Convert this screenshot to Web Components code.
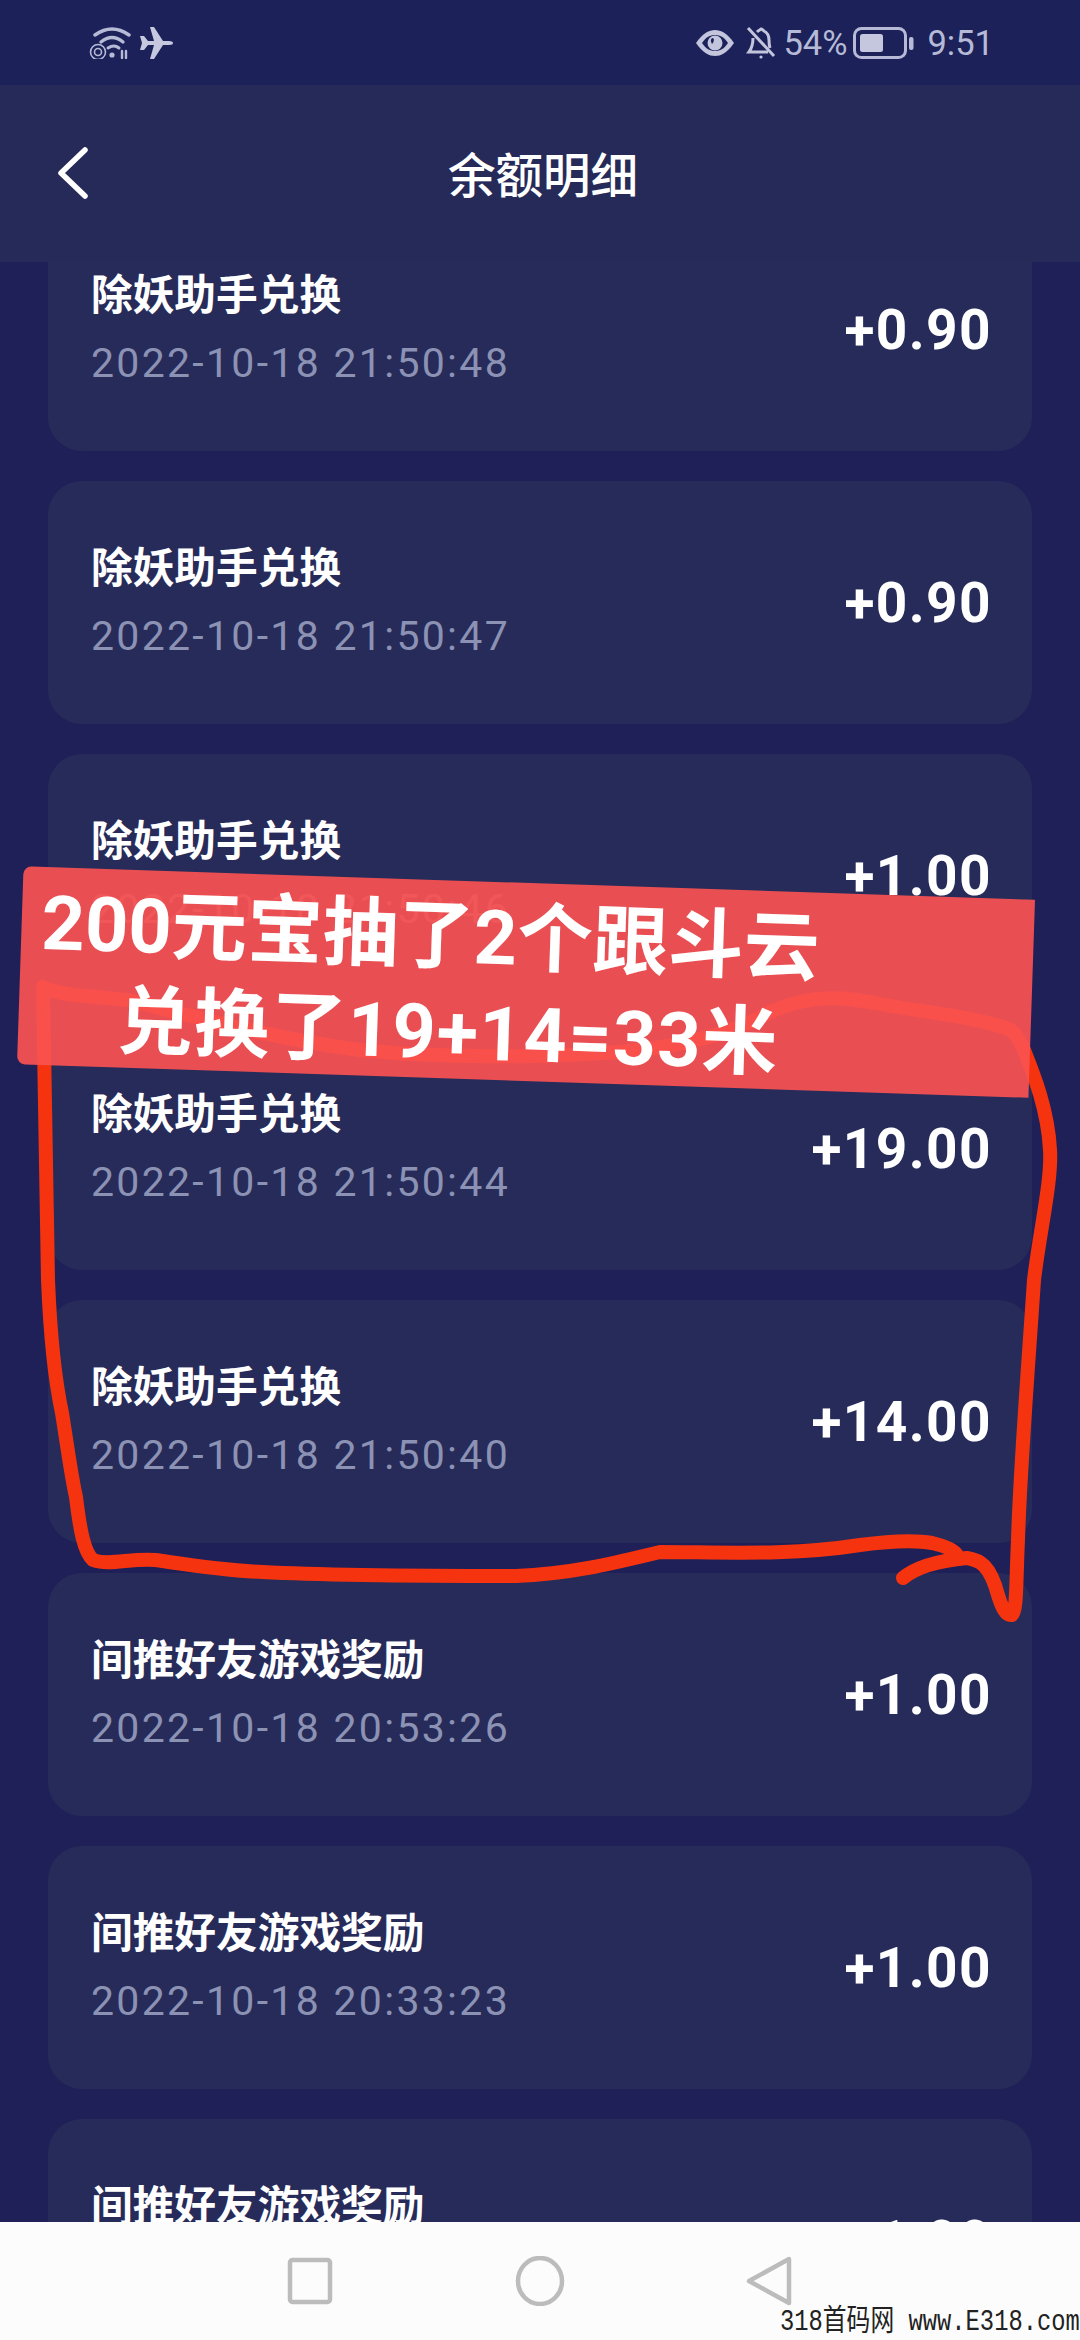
<!DOCTYPE html>
<html lang="zh">
<head>
<meta charset="utf-8">
<title>余额明细</title>
<style>
  html, body { margin: 0; padding: 0; background: #1f2058; }
  body { width: 1080px; height: 2340px; overflow: hidden; position: relative; }
</style>
</head>
<body>
<balance-app></balance-app>

<script>
const FONT = `Roboto, "Noto Sans CJK SC", sans-serif`;

class StatusBar extends HTMLElement {
  constructor() {
    super();
    this.attachShadow({mode: 'open'});
    this.shadowRoot.innerHTML = `
<style>
  :host {
    display: flex;
    align-items: center;
    height: 85px;
    padding: 0 86px 0 88px;
    box-sizing: border-box;
    background: #1c2259;
    color: #b6bad6;
    font: 400 34.5px ${FONT};
  }
  .left, .right { display: flex; align-items: center; }
  .left { gap: 3px; }
  .right { margin-left: auto; }
  svg { display: block; }
  .pct { margin: 0 6px 0 7px; }
  .time { margin-left: 12px; }
</style>
<div class="left">
  <svg width="48" height="32" viewBox="0 0 48 32" fill="none" stroke="#b6bad6" stroke-linecap="round">
    <path d="M7 8 Q24 -4 41 8" stroke-width="3.4"/>
    <path d="M13 15 Q24 6 35 15" stroke-width="3.4"/>
    <path d="M20 21 Q26 17 31 21" stroke-width="3"/>
    <circle cx="24" cy="28" r="2.6" fill="#b6bad6" stroke="none"/>
    <circle cx="10" cy="25" r="7.5" stroke-width="1.6"/>
    <circle cx="10" cy="25" r="3.5" stroke-width="1.6"/>
    <path d="M34 24v7M38 31v-7" stroke-width="2.4"/>
  </svg>
  <svg width="34" height="32" viewBox="0 0 34 32" fill="#c5c8de">
    <path d="M1 9l4 0 4 5 6 0-4-14 4 0 9 14 6 0c3 0 4 1 4 2s-1 2-4 2l-6 0-9 14-4 0 4-14-6 0-4 5-4 0 2-7z"/>
  </svg>
</div>
<div class="right">
  <svg width="40" height="28" viewBox="0 0 40 28">
    <path d="M1 14C8 4 14 1 20 1s12 3 19 13C32 24 26 27 20 27S8 24 1 14z" fill="#c2c5dc"/>
    <path d="M7 14C11 8 15 6 20 6s9 2 13 8c-4 6-8 8-13 8S11 20 7 14z" fill="#1c2259"/>
    <circle cx="20" cy="14" r="7.5" fill="#c2c5dc"/>
    <path d="M17 9c3 0 2 4 0 6-1-2-2-4 0-6z" fill="#1c2259"/>
  </svg>
  <svg width="30" height="32" viewBox="0 0 30 32" fill="none" stroke="#c2c5dc" stroke-width="3" style="margin-left:11px">
    <path d="M2 1l26 28"/>
    <path d="M7 11c0 6-1 10-4 14h19M11 5c2-2 3-2 4-3 1 0 2 1 3 2 4 2 5 5 5 9 0 3 0 5 1 8"/>
    <circle cx="15" cy="30" r="1.6" fill="#c2c5dc" stroke="none"/>
  </svg>
  <span class="pct">54%</span>
  <svg width="62" height="32" viewBox="0 0 62 32">
    <rect x="1.5" y="1.5" width="51" height="29" rx="7" fill="none" stroke="#b6bad6" stroke-width="3"/>
    <rect x="7" y="7" width="23" height="18" rx="2.5" fill="#c4c7dd"/>
    <rect x="56" y="10" width="4.5" height="13" rx="2" fill="#b6bad6"/>
  </svg>
  <span class="time">9:51</span>
</div>`;
  }
}

class TitleBar extends HTMLElement {
  constructor() {
    super();
    this.attachShadow({mode: 'open'});
    this.shadowRoot.innerHTML = `
<style>
  :host {
    display: flex;
    align-items: center;
    justify-content: center;
    position: relative;
    z-index: 1;
    height: 177px;
    padding: 0 0 3px 6px;
    box-sizing: border-box;
    background: #262a58;
    color: #fff;
    font: 500 47.5px ${FONT};
  }
  .back { position: absolute; left: 56px; top: 61px; display: block; }
</style>
<svg class="back" width="34" height="54" viewBox="0 0 34 54" fill="none" stroke="#fff" stroke-width="5.5" stroke-linecap="round" stroke-linejoin="round">
  <path d="M29 4L5 27l24 23"/>
</svg>
<span><slot></slot></span>`;
  }
}

class RecordCard extends HTMLElement {
  constructor() {
    super();
    this.attachShadow({mode: 'open'});
    this.shadowRoot.innerHTML = `
<style>
  :host {
    display: flex;
    align-items: flex-start;
    justify-content: space-between;
    flex: none;
    height: 243px;
    padding: 62px 40px 0 43px;
    box-sizing: border-box;
    background: #272b59;
    border-radius: 34px;
    color: #fff;
  }
  .name { font: 700 41.7px/52px ${FONT}; }
  .time {
    margin-top: 16px;
    color: #8c92b4;
    font: 400 41px/50px ${FONT};
    letter-spacing: 2.3px;
  }
  .amount {
    margin-top: 28px;
    font: 700 55px/64px ${FONT};
    letter-spacing: 1.4px;
  }
</style>
<div>
  <div class="name"><slot name="name"></slot></div>
  <div class="time"><slot name="time"></slot></div>
</div>
<div class="amount"><slot name="amount"></slot></div>`;
  }
}

class NavBar extends HTMLElement {
  constructor() {
    super();
    this.attachShadow({mode: 'open'});
    this.shadowRoot.innerHTML = `
<style>
  :host {
    display: flex;
    justify-content: center;
    align-items: flex-start;
    gap: 180px;
    flex: none;
    height: 118px;
    padding-top: 34px;
    box-sizing: border-box;
    background: #fcfcfc;
    position: relative;
  }
  svg { display: block; }
  .mark {
    position: absolute;
    right: 0;
    bottom: -1px;
    color: #222;
    font: 400 28px/36px "Liberation Mono", "Noto Sans CJK SC", monospace;
    white-space: nowrap;
    transform: scale(.85, 1.05);
    transform-origin: right center;
  }
</style>
<svg width="50" height="50" viewBox="0 0 50 50" fill="none" stroke="#bcbcbc" stroke-width="4.5" stroke-linejoin="round">
  <rect x="5" y="4" width="40" height="42" rx="2.5"/>
</svg>
<svg width="50" height="50" viewBox="0 0 50 50" fill="none" stroke="#bcbcbc" stroke-width="4.5">
  <ellipse cx="25" cy="25" rx="22" ry="23"/>
</svg>
<svg width="50" height="50" viewBox="0 0 50 50" fill="none" stroke="#bcbcbc" stroke-width="4.5" stroke-linejoin="round">
  <path d="M44 3v44L4 25z"/>
</svg>
<span class="mark">318首码网 www.E318.com</span>`;
  }
}

class HandAnnotation extends HTMLElement {
  constructor() {
    super();
    this.attachShadow({mode: 'open'});
    this.shadowRoot.innerHTML = `
<style>
  :host {
    display: block;
    position: absolute;
    left: 0;
    top: 0;
    width: 1080px;
    height: 2340px;
    z-index: 2;
    pointer-events: none;
  }
  svg { position: absolute; left: 0; top: 0; }
  .banner {
    position: absolute;
    left: 20px;
    top: 883px;
    width: 1012px;
    height: 198px;
    padding: 8px 0 0 20px;
    box-sizing: border-box;
    background: rgba(250, 82, 81, .92);
    border-radius: 8px 0 0 8px;
    transform: rotate(1.9deg);
    color: #fff;
    font: 700 75.6px/96px ${FONT};
    white-space: nowrap;
  }
  .second { padding-left: 79px; letter-spacing: 1.2px; }
</style>
<svg width="1080" height="2340" viewBox="0 0 1080 2340" fill="none" stroke="#f5340f" stroke-width="14" stroke-linecap="round" stroke-linejoin="round">
  <path d="M43 987C44 1060 46 1170 48 1280C50 1330 55 1380 62 1413C68 1450 71 1475 76 1497C80 1530 84 1552 93 1560C110 1566 130 1558 155 1560C190 1565 220 1570 262 1572C340 1576 440 1576 516 1576C570 1574 610 1564 660 1552C720 1552 790 1556 860 1545C890 1541 915 1540 932 1543C945 1546 954 1550 957 1555"/>
  <path d="M903 1578C915 1568 935 1561 967 1558C980 1560 990 1565 998 1595C1002 1608 1006 1616 1012 1615C1017 1612 1016 1580 1018 1540C1020 1470 1028 1370 1034 1280C1040 1230 1052 1180 1050 1150C1048 1110 1034 1075 1024 1050C1015 1030 1012 1030 1000 1026C960 1014 920 1012 880 1004C850 998 815 992 770 1012C740 1030 690 1046 620 1052C540 1058 440 1058 360 1050C280 1040 200 1018 127 1000C90 996 60 996 43 987"/>
</svg>
<div class="banner">
  <div>200元宝抽了2个跟斗云</div>
  <div class="second">兑换了19+14=33米</div>
</div>`;
  }
}

class BalanceApp extends HTMLElement {
  constructor() {
    super();
    this.attachShadow({mode: 'open'});
    const records = [
      ['除妖助手兑换', '2022-10-18 21:50:48', '+0.90'],
      ['除妖助手兑换', '2022-10-18 21:50:47', '+0.90'],
      ['除妖助手兑换', '2022-10-18 21:50:46', '+1.00'],
      ['除妖助手兑换', '2022-10-18 21:50:44', '+19.00'],
      ['除妖助手兑换', '2022-10-18 21:50:40', '+14.00'],
      ['间推好友游戏奖励', '2022-10-18 20:53:26', '+1.00'],
      ['间推好友游戏奖励', '2022-10-18 20:33:23', '+1.00'],
      ['间推好友游戏奖励', '2022-10-18 20:21:10', '+1.00'],
    ];
    const cards = records.map((r) => `
      <record-card>
        <span slot="name">${r[0]}</span>
        <span slot="time">${r[1]}</span>
        <span slot="amount">${r[2]}</span>
      </record-card>`).join('');
    this.shadowRoot.innerHTML = `
<style>
  :host {
    display: flex;
    flex-direction: column;
    width: 1080px;
    height: 2340px;
    background: #1f2058;
  }
  .list {
    flex: 1;
    min-height: 0;
    overflow: hidden;
    display: flex;
    flex-direction: column;
    gap: 30px;
    padding: 0 48px;
  }
  record-card:first-child { margin-top: -54px; }
</style>
<status-bar></status-bar>
<title-bar>余额明细</title-bar>
<div class="list">${cards}</div>
<nav-bar></nav-bar>
<hand-annotation></hand-annotation>`;
  }
}

customElements.define('status-bar', StatusBar);
customElements.define('title-bar', TitleBar);
customElements.define('record-card', RecordCard);
customElements.define('nav-bar', NavBar);
customElements.define('hand-annotation', HandAnnotation);
customElements.define('balance-app', BalanceApp);
</script>
</body>
</html>
